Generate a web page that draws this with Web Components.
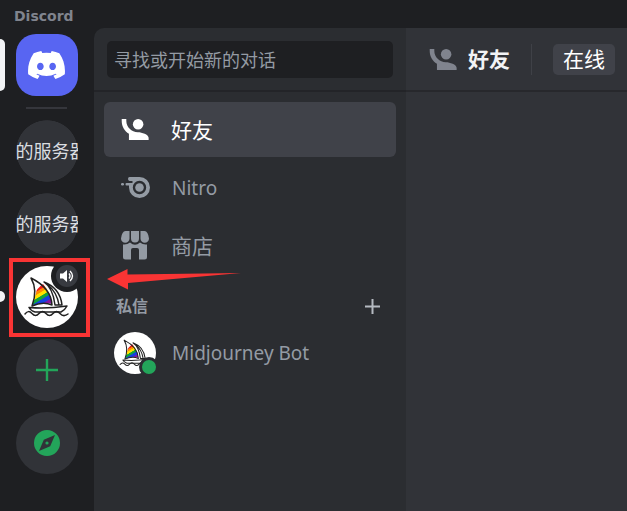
<!DOCTYPE html>
<html lang="zh-CN">
<head>
<meta charset="utf-8">
<title>Discord</title>
<style>
html, body { height: 100%; }
body {
  margin: 0;
  background: #1e1f22;
  color: #949ba4;
  font-family: "Noto Sans", "Noto Sans CJK SC", sans-serif;
  --rail: #1e1f22;
  --panel: #2b2d31;
  --main: #313338;
  --raised: #404249;
  --green: #23a55a;
}
</style>
</head>
<body>
<discord-app></discord-app>
<script>
const define = (name, html, setup) => {
  const template = document.createElement('template');
  template.innerHTML = '<style>*{box-sizing:border-box}svg{display:block}button,a,input{font:inherit;color:inherit}button{border:0;padding:0;background:none;cursor:pointer}</style>' + html;
  customElements.define(name, class extends HTMLElement {
    constructor() {
      super();
      this.attachShadow({ mode: 'open' }).append(template.content.cloneNode(true));
      if (setup) setup(this, this.shadowRoot);
    }
  });
};

define('icon-friends', `
<style>:host{display:block;width:29px}</style>
<svg viewBox="0 0 22 16" width="29" height="21" fill="currentColor" aria-hidden="true">
  <path d="M.5 0V1.5C.5 5.65 2.71 9.28 6 11.3V16H21V14.34C21 11.67 15.67 10 13 10H12.75C8 10 4 6 4 1.5V0Z"/>
  <circle cx="13" cy="4" r="4"/>
</svg>`);

define('icon-nitro', `
<style>:host{display:block;width:29px}</style>
<svg viewBox="0 0 29 21" width="29" height="21" fill="currentColor" aria-hidden="true">
  <path fill-rule="evenodd" d="M8.500 0H18.500A10.500 10.500 0 1 1 8 10.500L8 8.500H5.500Q4.500 8.500 4.500 7.300Q4.500 6 5.500 6H11.500V4H8.500Q7 3.500 7 2Q7 0 8.500 0ZM18.500 3.800A6.700 6.700 0 1 0 18.500 17.200A6.700 6.700 0 1 0 18.500 3.800Z"/>
  <rect x="0" y="6" width="3" height="2.400" rx="1.200"/>
  <circle cx="18.500" cy="10.500" r="4.300"/>
</svg>`);

define('icon-shop', `
<style>:host{display:block;width:29px}</style>
<svg viewBox="0 0 28 29" width="28" height="29" fill="currentColor" aria-hidden="true">
  <path d="M4.500 0H8.500V7.500A4.200 4.200 0 0 1 0 7.500Q1 0 4.500 0ZM10 0H18V7.500A4 4 0 0 1 10 7.500ZM19.500 0H23.500Q27 0 28 7.500A4.200 4.200 0 0 1 19.500 7.500Z"/>
  <path d="M2 13.500Q6 14 9 11.500Q14 16 19 11.500Q22 14 26 13.500V26Q26 28.500 23.500 28.500H18V19Q18 17 16 17H12Q10 17 10 19V28.500H4.500Q2 28.500 2 26Z"/>
</svg>`);

define('icon-sailboat', `
<style>:host{display:block}svg{width:100%;height:100%}</style>
<svg viewBox="0 0 62 62" aria-hidden="true" fill="none" stroke="#222" stroke-width="1.500" stroke-linejoin="round" stroke-linecap="round">
  <defs>
    <linearGradient id="rainbow" gradientUnits="userSpaceOnUse" x1="20" y1="20" x2="32" y2="40">
      <stop offset=".1" stop-color="#ec1c1c"/><stop offset=".2" stop-color="#ec1c1c"/>
      <stop offset=".23" stop-color="#ff8a00"/><stop offset=".32" stop-color="#ff8a00"/>
      <stop offset=".35" stop-color="#ffe100"/><stop offset=".46" stop-color="#ffe100"/>
      <stop offset=".49" stop-color="#12a33a"/><stop offset=".6" stop-color="#12a33a"/>
      <stop offset=".63" stop-color="#1440e0"/><stop offset=".77" stop-color="#1440e0"/>
      <stop offset=".81" stop-color="#8417a0"/>
    </linearGradient>
  </defs>
  <path d="M15 12Q22 24 16 40Q27 35 36 39Q35 22 15 12Z" fill="#fff" stroke="none"/>
  <path d="M27 18Q20 23 20 27L16 40Q27 35 36 38Q35 27 27 18Z" fill="url(#rainbow)" stroke="none"/>
  <path d="M15 12Q22 24 16 40Q27 35 36 39Q35 22 15 12ZM28 16Q37 22 39 39H46Q44 22 28 16ZM31 18Q41 26 43 39"/>
  <path d="M13 41.500Q31 43 51 40Q49 44 45 46H19Q15 45 13 41.500Z" fill="#fff"/>
  <path d="M9 48Q12.500 43.500 16 47.500T23 47.500T30 47.500T37 47.500T44 47.500T52 48"/>
</svg>`);

define('rail-item', `
<style>
  :host{display:block;position:relative;width:62px;height:62px;flex:none}
  button{display:flex;align-items:center;justify-content:center;width:100%;height:100%;border-radius:50%;background:var(--main);color:var(--green)}
  :host([home]) button{border-radius:20px;background:#5865f2;color:#fff}
  :host([text]) button{justify-content:flex-start;border-radius:0;overflow:hidden;white-space:nowrap;font-size:18px;line-height:24px;color:#dbdee1;background:radial-gradient(circle closest-side,var(--main) 98%,transparent)}
  :host([avatar]) button{background:#fff;overflow:hidden}
</style>
<button><slot></slot></button><slot name="badge"></slot>`, (host, root) => {
  const label = host.getAttribute('label');
  if (label) root.querySelector('button').setAttribute('aria-label', label);
});

define('voice-badge', `
<style>
  :host{position:absolute;right:-5px;top:-6px;width:32px;height:32px;border-radius:50%;background:var(--rail);display:grid;place-items:center}
  span{display:grid;place-items:center;width:22px;height:22px;border-radius:50%;background:#383a40;color:#fff}
</style>
<span><svg viewBox="0 0 14 12" width="14" height="12" aria-hidden="true"><path fill="currentColor" d="M0 3.500H3L7 0V12L3 8.500H0Z"/><path d="M9 3.500Q11 6 9 8.500M10 1Q15 6 10 11" fill="none" stroke="currentColor" stroke-width="1.400"/></svg></span>`);

define('server-rail', `
<style>
  :host{display:flex;flex-direction:column;align-items:center;gap:11px;width:94px;flex:none;padding:6px 1px 0 0;position:relative}
  hr{width:41px;height:2px;margin:0;border:0;background:#35363c;flex:none}
  .pill{position:absolute;left:0;background:#f2f3f5;border-radius:0 5px 5px 0}
  .selected{top:11px;width:5px;height:52px}
  .unread{top:263px;width:5px;height:11px}
  icon-sailboat{width:62px;height:62px}
</style>
<span class="pill selected"></span><span class="pill unread"></span>
<rail-item home label="私信">
  <svg viewBox="0 0 127.140 96.360" width="37" height="28" fill="#fff" aria-hidden="true"><path d="M107.700 8.070A105.150 105.150 0 0 0 81.470 0a72.060 72.060 0 0 0-3.360 6.830 97.680 97.680 0 0 0-29.110 0A72.370 72.370 0 0 0 45.640 0a105.890 105.890 0 0 0-26.250 8.090C2.790 32.650-1.710 56.600.540 80.210a105.730 105.730 0 0 0 32.170 16.150 77.700 77.700 0 0 0 6.890-11.110 68.420 68.420 0 0 1-10.850-5.180c.910-.660 1.800-1.340 2.660-2a75.570 75.570 0 0 0 64.320 0c.870.710 1.760 1.390 2.660 2a68.680 68.680 0 0 1-10.870 5.190 77 77 0 0 0 6.890 11.100 105.250 105.250 0 0 0 32.190-16.140c2.640-27.380-4.510-51.110-18.900-72.150ZM42.450 65.690C36.180 65.690 31 60 31 53s5-12.740 11.430-12.740S54 46 53.890 53s-5.050 12.690-11.440 12.690Zm42.240 0C78.410 65.690 73.250 60 73.250 53s5-12.740 11.440-12.740S96.230 46 96.120 53s-5.040 12.690-11.430 12.690Z"/></svg>
</rail-item>
<hr>
<rail-item text>的服务器</rail-item>
<rail-item text>的服务器</rail-item>
<rail-item avatar label="Midjourney"><icon-sailboat></icon-sailboat><voice-badge slot="badge"></voice-badge></rail-item>
<rail-item label="添加服务器"><svg viewBox="0 0 22 22" width="22" height="22" aria-hidden="true"><path d="M11 0V22M0 11H22" stroke="currentColor" stroke-width="2.400"/></svg></rail-item>
<rail-item label="探索"><svg viewBox="0 0 26 26" width="26" height="26" aria-hidden="true"><path fill-rule="evenodd" fill="currentColor" d="M13 0A13 13 0 1 0 13 26A13 13 0 1 0 13 0ZM21 5L16.200 16.200L5 21L9.800 9.800ZM13 11.400A1.600 1.600 0 1 0 13 14.600A1.600 1.600 0 1 0 13 11.400Z"/></svg></rail-item>`);

define('nav-item', `
<style>
  :host{display:block}
  a{display:flex;align-items:center;gap:15px;height:55px;padding:0 10px;border-radius:6px;text-decoration:none;font-size:21px;line-height:28px}
  .icon{display:grid;place-items:center;width:42px;flex:none}
  :host([selected]) a{background:var(--raised);color:#fff}
  :host([latin]) a{font-size:19px;gap:16px}
</style>
<a href="#"><span class="icon"><slot name="icon"></slot></span><span><slot></slot></span></a>`);

define('bot-avatar', `
<style>
  :host{display:block;position:relative;width:42px;height:42px}
  icon-sailboat{width:42px;height:42px;border-radius:50%;background:#fff}
  span{position:absolute;right:-3px;bottom:-3px;width:20px;height:20px;border-radius:50%;background:var(--green);border:3px solid var(--panel)}
</style>
<icon-sailboat></icon-sailboat><span></span>`);

define('dm-sidebar', `
<style>
  :host{display:flex;flex-direction:column;width:312px;flex:none;background:var(--panel);border-radius:10px 0 0 0}
  header{height:64px;padding:13px 13px 0;border-bottom:2px solid #232428}
  input{display:block;width:100%;height:37px;border:0;border-radius:5px;padding:0 7px;background:var(--rail);font-size:18px;outline:0}
  input::placeholder{color:#949ba4;opacity:1}
  nav{display:flex;flex-direction:column;gap:3px;padding:10px 10px 0}
  .section{display:flex;align-items:center;justify-content:space-between;height:46px;padding:14px 16px 0 12px}
  h2{margin:0;font-size:16px;line-height:24px;font-weight:600}
</style>
<header><input type="text" aria-label="寻找或开始新的对话" placeholder="寻找或开始新的对话"></header>
<nav>
  <nav-item selected><icon-friends slot="icon"></icon-friends>好友</nav-item>
  <nav-item latin><icon-nitro slot="icon"></icon-nitro>Nitro</nav-item>
  <nav-item><icon-shop slot="icon"></icon-shop>商店</nav-item>
  <div class="section"><h2>私信</h2><button aria-label="创建私信"><svg viewBox="0 0 15 15" width="15" height="15" aria-hidden="true"><path d="M7.500 0V15M0 7.500H15" stroke="#b5bac1" stroke-width="2"/></svg></button></div>
  <nav-item latin><bot-avatar slot="icon"></bot-avatar>Midjourney Bot</nav-item>
</nav>`);

define('friends-view', `
<style>
  :host{display:block;flex:1;min-width:0;background:var(--main)}
  header{display:flex;align-items:center;height:64px;padding:0 12px 0 23px;border-bottom:2px solid #27282c;color:#80848e}
  h1{margin:0 0 0 10px;font-size:21px;line-height:30px;font-weight:600;color:#f2f3f5;white-space:nowrap}
  i{width:1px;height:31px;margin:0 21px;background:#3f4147}
  button{height:31px;padding:0 10px;border-radius:5px;background:var(--raised);color:#fff;font-size:21px;line-height:31px;font-weight:400;white-space:nowrap}
</style>
<header><icon-friends></icon-friends><h1>好友</h1><i></i><button>在线</button></header>`);

define('callout-marks', `
<style>
  :host{position:absolute;left:9px;top:258px;pointer-events:none}
  div{width:81px;height:79px;border:4px solid #f93434}
  svg{position:absolute;left:98px;top:10px}
</style>
<div></div>
<svg viewBox="0 0 134 22" width="134" height="22" aria-hidden="true"><path fill="#f93434" d="M0 11L20.500 1V6.500L134 5L21 15V21.500Z"/></svg>`);

define('discord-app', `
<style>
  :host{display:flex;flex-direction:column;min-height:100vh;position:relative}
  .title{height:28px;padding:6px 14px 0;font:bold 14px/20px "DejaVu Sans","Noto Sans",sans-serif;color:#80848e}
  main{display:flex;flex:1}
</style>
<div class="title">Discord</div>
<main><server-rail></server-rail><dm-sidebar></dm-sidebar><friends-view></friends-view></main>
<callout-marks></callout-marks>`);
</script>
</body>
</html>
